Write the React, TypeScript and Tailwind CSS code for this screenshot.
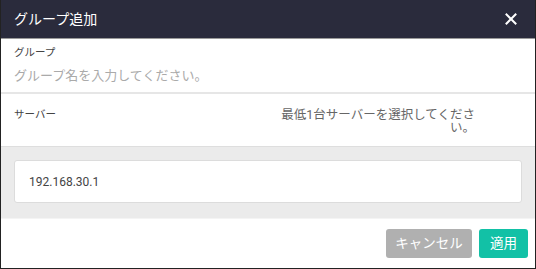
import React from 'react';

const jp = { fontFamily: 'Roboto, "Noto Sans CJK JP", sans-serif' };

export default function App() {
  return (
    <div className="w-[536px] h-[269px] bg-white border-x border-b border-[#222] flex flex-col" style={jp}>
      <div className="h-[39px] bg-[#2a2b3c] flex items-center justify-between pl-[13px] pr-[18px] border-b border-[#9a9a9a] shrink-0">
        <span className="text-white text-[14px]">グループ追加</span>
        <svg width="12" height="12" viewBox="0 0 12 12" className="mt-[-1px]">
          <path d="M1.5 1.5 L10.5 10.5 M10.5 1.5 L1.5 10.5" stroke="#fff" strokeWidth="2" strokeLinecap="square" />
        </svg>
      </div>

      <div className="h-[55px] px-[13px] pt-[7px] border-b-2 border-[#e6e6e6] shrink-0">
        <div className="text-[10.5px] text-[#444] leading-[14px]">グループ</div>
        <input
          className="mt-[7px] w-full text-[13px] leading-[18px] outline-none placeholder:text-[#aaa]"
          placeholder="グループ名を入力してください。"
        />
      </div>

      <div className="h-[52px] flex justify-between pl-[13px] pr-[60px] pt-[14px] shrink-0">
        <div className="text-[10.5px] text-[#444] leading-[14px]">サーバー</div>
        <div className="w-[200px] text-right text-[12.5px] text-[#666] leading-[13px]">
          最低1台サーバーを選択してください。
        </div>
      </div>

      <div className="h-[73px] bg-[#ebebeb] border-t border-[#dedede] border-b border-b-[#f4f4f4] px-[13px] pt-[13px] shrink-0">
        <div className="h-[43px] bg-white border border-[#dcdcdc] rounded-[3px] flex items-center pl-[14px]">
          <span className="text-[12px] text-[#444]">192.168.30.1</span>
        </div>
      </div>

      <div className="flex-1 flex justify-end items-center gap-[7px] pr-[7px] pb-[1px]">
        <button className="h-[29px] w-[86px] rounded-[3px] bg-[#b0b0b0] text-white text-[13.5px]">キャンセル</button>
        <button className="h-[29px] w-[49px] rounded-[3px] bg-[#12c1a6] text-white text-[13.5px]">適用</button>
      </div>
    </div>
  );
}
